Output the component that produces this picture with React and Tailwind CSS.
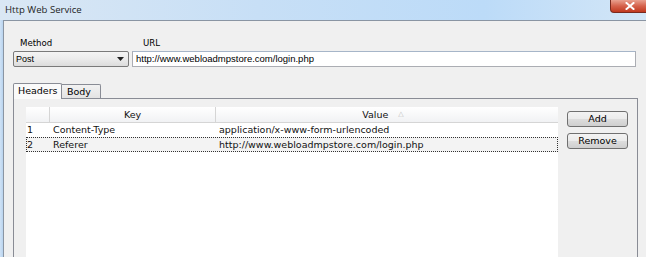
import React from "react";

const tahoma = { fontFamily: '"DejaVu Sans", Verdana, sans-serif' };

export default function App() {
  return (
    <div className="w-[646px] h-[257px] overflow-hidden flex flex-col bg-[#f0f0f0] text-black" style={tahoma}>
      {/* title bar */}
      <div className="h-[20px] flex items-start bg-[linear-gradient(90deg,#dae7f4_0%,#c7dff6_40%,#bcdbf8_75%,#d3e6f7_100%)] shrink-0">
        <div className="pl-[5px] pt-[4px] text-[9.6px] leading-[12px] text-[#1e1e1e] font-['Open_Sans',sans-serif]">Http Web Service</div>
        <div className="ml-auto mr-[-10px] w-[46px] h-[13px] rounded-bl-[4px] border border-t-0 border-[#7a2a1e] bg-[linear-gradient(180deg,#e9a08f_0%,#d5624c_50%,#c0391f_100%)] flex items-center justify-start pl-[14px]">
          <svg width="10" height="8" viewBox="0 0 10 8">
            <path d="M1.5 1 L8.5 7 M8.5 1 L1.5 7" stroke="#ffffff" strokeWidth="2" strokeLinecap="square" />
          </svg>
        </div>
      </div>
      {/* window body */}
      <div className="flex flex-1 min-h-0 bg-[#c6dbf1]">
        <div className="w-[3px] shrink-0 bg-[linear-gradient(90deg,#cfe2f6,#b9d4ef)]" />
        <div className="flex-1 min-w-0 border-l border-t border-[#8a95a3] bg-[#f0f0f0] flex flex-col">
          {/* labels */}
          <div className="flex mt-[16px] h-[12px] text-[8.6px] leading-[12px]">
            <div className="ml-[16px] w-[123px]">Method</div>
            <div>URL</div>
          </div>
          {/* inputs */}
          <div className="flex mt-[2px] ml-[9px] gap-[3px] h-[16px]">
            <div className="w-[116px] h-[16px] rounded-[2px] border border-[#7a7a7a] bg-[linear-gradient(180deg,#f4f4f4_0%,#ebebeb_50%,#dcdcdc_100%)] flex items-center pl-[2px] pr-[4px]">
              <span className="text-[9px] leading-[12px] font-['Liberation_Sans',Arial,sans-serif]">Post</span>
              <svg className="ml-auto" width="7" height="4" viewBox="0 0 7 4">
                <path d="M0 0 L7 0 L3.5 4 Z" fill="#222" />
              </svg>
            </div>
            <div className="w-[504px] h-[16px] border border-[#abadb3] border-t-[#a6b5c8] bg-white flex items-center pl-[3px]">
              <span className="text-[9.5px] leading-[12px] font-['Liberation_Sans',Arial,sans-serif]">http://www.webloadmpstore.com/login.php</span>
            </div>
          </div>
          {/* tabs */}
          <div className="flex items-end mt-[15px] ml-[9px] h-[16px]">
            <div className="h-[16px] w-[49px] border border-b-0 border-[#898c95] bg-[#fafafa] rounded-t-[2px] text-[9.5px] leading-[14px] pl-[4px] relative z-10 mb-[-1px]">Headers</div>
            <div className="h-[14px] w-[39px] border border-l-0 border-b-0 border-[#898c95] bg-[linear-gradient(180deg,#f2f2f2,#e3e3e3)] rounded-tr-[2px] text-[9.5px] leading-[13px] pl-[5px]">Body</div>
          </div>
          {/* panel */}
          <div className="ml-[9px] w-[625px] flex-1 border border-[#898c95] border-b-0 bg-[#f0f0f0] flex pt-[8px] pl-[12px]">
            {/* table */}
            <div className="w-[532px] bg-white flex flex-col text-[9.5px] text-[#111]">
              <div className="h-[16px] flex border-b border-[#d5d5d5] bg-[linear-gradient(180deg,#ffffff,#f1f2f4)]">
                <div className="w-[24px] border-r border-[#d5d5d5]" />
                <div className="w-[166px] border-r border-[#d5d5d5] text-center leading-[15px]">Key</div>
                <div className="flex-1 flex justify-center items-center leading-[15px]">
                  <span className="ml-[-8px]">Value</span>
                  <span className="ml-[10px] text-[7px] text-[#bbbbbb]">△</span>
                </div>
              </div>
              <div className="h-[14px] flex leading-[14px]">
                <div className="w-[24px] pl-[1px]">1</div>
                <div className="w-[166px] pl-[3px]">Content-Type</div>
                <div className="flex-1 pl-[3px]">application/x-www-form-urlencoded</div>
              </div>
              <div className="h-[15px] flex leading-[13px] border border-dotted border-[#333] bg-[#f3f3f3]">
                <div className="w-[23px]">2</div>
                <div className="w-[166px] pl-[3px]">Referer</div>
                <div className="flex-1 pl-[3px]">http://www.webloadmpstore.com/login.php</div>
              </div>
            </div>
            {/* buttons */}
            <div className="flex flex-col ml-[9px] mt-[4px] gap-[6px]">
              <button className="w-[61px] h-[16px] rounded-[3px] border border-[#707070] bg-[linear-gradient(180deg,#f3f3f3_0%,#ebebeb_50%,#dddddd_51%,#cfcfcf_100%)] text-[9.5px] leading-[14px]">Add</button>
              <button className="w-[61px] h-[16px] rounded-[3px] border border-[#707070] bg-[linear-gradient(180deg,#f3f3f3_0%,#ebebeb_50%,#dddddd_51%,#cfcfcf_100%)] text-[9.5px] leading-[14px]">Remove</button>
            </div>
          </div>
        </div>
      </div>
    </div>
  );
}
